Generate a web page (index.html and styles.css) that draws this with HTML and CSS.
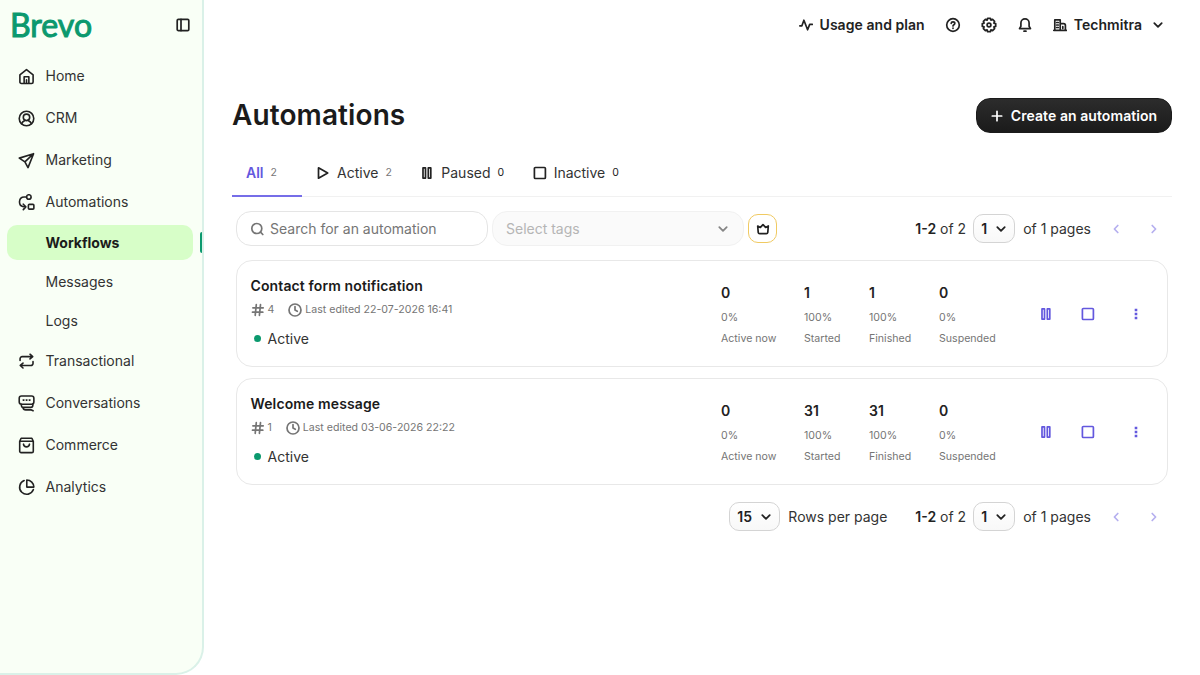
FILE: index.html
```html
<!DOCTYPE html>
<html lang="en">
<head>
    <meta charset="UTF-8">
    <title>Automations</title>
    <link rel="stylesheet" href="styles.css">
</head>
<body>
<!-- shared icons -->
<svg class="sprite">
    <symbol id="chevron" viewBox="0 0 12 12"><path d="M2.300 4.200L6 7.800l3.700-3.600"/></symbol>
    <symbol id="left" viewBox="0 0 12 12"><path d="M7.800 2.500L4.400 6l3.400 3.500"/></symbol>
    <symbol id="right" viewBox="0 0 12 12"><path d="M4.200 2.500L7.600 6 4.200 9.500"/></symbol>
    <symbol id="pause" viewBox="0 0 14 14"><path d="M3 1.900h2.500v10.200H3zM8.300 1.900h2.500v10.200H8.300z"/></symbol>
    <symbol id="stop" viewBox="0 0 14 14"><rect x="1.400" y="1.500" width="11" height="11" rx="1"/></symbol>
    <symbol id="hash" viewBox="0 0 14 14"><path d="M5.300 1.700L4.200 12.300M9.500 1.700L8.400 12.300M1.900 4.800h10.300M1.500 9.200h10.300"/></symbol>
    <symbol id="clock" viewBox="0 0 14 14"><circle cx="7" cy="7" r="6"/><path d="M7 3.500V7l2.300 1.300"/></symbol>
    <symbol id="dots" viewBox="0 0 14 14"><path class="solid" d="M5.700 1.700h2.600v2.600H5.700zM5.700 5.700h2.600v2.600H5.700zM5.700 9.700h2.600v2.600H5.700z"/></symbol>
</svg>

<div class="app">
    <aside class="sidebar">
        <div class="brand">
            <span class="logo">Brevo</span>
            <svg class="icon toggle" viewBox="0 0 14 14"><rect x="1.200" y="1.400" width="11.600" height="11.200" rx="1.200"/><path d="M5 1.400v11.200"/></svg>
        </div>
        <nav class="menu">
            <a class="item"><svg class="icon" viewBox="0 0 18 18"><path d="M2 7.200L9 1.600l7 5.600v7.600a1.600 1.600 0 0 1-1.600 1.600H3.600A1.600 1.600 0 0 1 2 14.800z"/><path d="M6.500 16.200V9.300h5v6.900M9 12.500v3.700"/></svg>Home</a>
            <a class="item"><svg class="icon" viewBox="0 0 18 18"><circle cx="9" cy="9" r="7.700"/><circle cx="9" cy="7.800" r="3.400"/><path d="M3.800 14.600c.6-2 2-3 3.500-3.600M14.200 14.600c-.6-2-2-3-3.500-3.600"/></svg>CRM</a>
            <a class="item"><svg class="icon" viewBox="0 0 18 18"><path d="M16.500 1.800L1.400 6.500l5.900 4 3.300 6zM16.500 1.800l-9.200 8.700"/></svg>Marketing</a>
            <a class="item"><svg class="icon" viewBox="0 0 18 18"><circle cx="11.500" cy="3.200" r="2.400"/><rect x="11" y="11" width="5.800" height="5" rx="1"/><path d="M9 3.200H6.500c-6 0-6.500 8.600-1.500 10.100l3 .3M5.600 10.800l2.700 2.800-2.700 2.900"/></svg>Automations</a>
            <div class="sub-wrap current"><a class="sub">Workflows</a></div>
            <div class="sub-wrap"><a class="sub">Messages</a></div>
            <div class="sub-wrap"><a class="sub">Logs</a></div>
            <a class="item"><svg class="icon" viewBox="0 0 18 18"><path d="M2.200 8V6a2.200 2.200 0 0 1 2.200-2.200h11M12.700 1.300L15.600 3.800 12.700 6.300M15.900 9v2a2.200 2.200 0 0 1-2.200 2.200H2.500M5.300 10.700L2.400 13.200 5.300 15.900"/></svg>Transactional</a>
            <a class="item"><svg class="icon" viewBox="0 0 18 18"><rect x="1.300" y="1" width="15.500" height="8.800" rx="2.400"/><path d="M3.600 9.800v1.700a1.600 1.600 0 0 0 1.600 1.600h8.200a2.300 2.300 0 0 0 2.300-2.300V9.500M5.200 13.100c.3 2 1.500 2.700 3 2.700h6l1.800.9M5.500 5.400h.8M8.700 5.400h.8M11.900 5.400h.8"/></svg>Conversations</a>
            <a class="item"><svg class="icon" viewBox="0 0 18 18"><path d="M1.800 4.500L3.300 1.300h11.400l1.500 3.200V15a1.500 1.500 0 0 1-1.500 1.500H3.300A1.500 1.500 0 0 1 1.800 15zM1.800 4.500h14.400M5.800 7.600c.5 3.800 5.900 3.800 6.400 0"/></svg>Commerce</a>
            <a class="item"><svg class="icon" viewBox="0 0 18 18"><path d="M6.500 1.700a7.500 7.500 0 1 0 9.800 9.500"/><path d="M9.300 1.100a7.600 7.600 0 0 1 7.500 7.500H9.300z"/></svg>Analytics</a>
        </nav>
    </aside>

    <main class="main">
        <header class="topbar">
            <a class="usage"><svg class="icon" viewBox="0 0 14 14"><path d="M.8 7.800h2.100L4.900 2.200 8.600 11.800 10.700 6.400h2.600"/></svg>Usage and plan</a>
            <svg class="icon" viewBox="0 0 16 16"><circle cx="8" cy="8" r="6.300"/><path d="M6.200 6.400C6.300 4.300 9.800 4.400 9.800 6.400 9.800 7.700 8 7.700 8 9M8 11v.3"/></svg>
            <svg class="icon" viewBox="0 0 16 16"><path d="M6.600 1.300h2.800l.5 1.800 1.700-.7 2 2-.7 1.700 1.800.5v2.800l-1.800.5.7 1.700-2 2-1.700-.7-.5 1.800H6.600l-.5-1.800-1.700.7-2-2 .7-1.700-1.800-.5V6.600l1.800-.5-.7-1.700 2-2 1.700.7z"/><circle cx="8" cy="8" r="1.900"/></svg>
            <svg class="icon" viewBox="0 0 16 16"><path d="M3.900 9.300V6a4.100 4.100 0 0 1 8.200 0v3.300l1.400 2.300h-11zM7 14.200h2"/></svg>
            <a class="account"><svg class="icon" viewBox="0 0 14 14"><path d="M1.800 12.400V1.900h5.400v10.500M7.200 5.600h3.400a1.800 1.800 0 0 1 1.800 1.800v5M.8 12.400h12.600M3.700 4.500h1.600M3.700 7h1.600M3.700 9.500h1.600M9.800 8.700v1.600"/></svg>Techmitra<svg class="icon chev"><use href="#chevron"/></svg></a>
        </header>

        <div class="title-row">
            <h1>Automations</h1>
            <button class="create"><svg class="icon" viewBox="0 0 12 12"><path d="M6 1.300v9.400M1.300 6h9.400"/></svg>Create an automation</button>
        </div>

        <div class="tabs">
            <a class="tab active">All<span class="count">2</span></a>
            <a class="tab"><svg class="icon" viewBox="0 0 14 14"><path d="M2.500 1.800v10.400L11.700 7z"/></svg>Active<span class="count">2</span></a>
            <a class="tab"><svg class="icon"><use href="#pause"/></svg>Paused<span class="count dark">0</span></a>
            <a class="tab"><svg class="icon"><use href="#stop"/></svg>Inactive<span class="count dark">0</span></a>
        </div>

        <div class="toolbar">
            <div class="field search"><svg class="icon" viewBox="0 0 14 14"><circle cx="6.800" cy="6.500" r="5"/><path d="M10.500 10.200l2.300 2.300"/></svg>Search for an automation</div>
            <div class="field tags">Select tags<svg class="icon chev"><use href="#chevron"/></svg></div>
            <div class="crown"><svg class="icon" viewBox="0 0 14 14"><path d="M1.700 4l2.700 1.400L7 2.600l2.600 2.800L12.300 4l-.5 6.300a1.500 1.500 0 0 1-1.500 1.300H3.700a1.500 1.500 0 0 1-1.500-1.300z"/></svg></div>
            <div class="pager">
                <span class="range"><b>1-2</b> of 2</span>
                <span class="select">1<svg class="icon chev"><use href="#chevron"/></svg></span>
                <span class="pages">of 1 pages</span>
                <svg class="icon arrow"><use href="#left"/></svg>
                <svg class="icon arrow"><use href="#right"/></svg>
            </div>
        </div>

        <section class="list">
            <article class="card">
                <div class="info">
                    <h2>Contact form notification</h2>
                    <div class="meta"><svg class="icon"><use href="#hash"/></svg><span class="num">4</span><svg class="icon clock"><use href="#clock"/></svg>Last edited 22-07-2026 16:41</div>
                    <div class="status">Active</div>
                </div>
                <div class="stats">
                    <div><b>0</b><span>0%</span><span>Active now</span></div>
                    <div><b>1</b><span>100%</span><span>Started</span></div>
                    <div><b>1</b><span>100%</span><span>Finished</span></div>
                    <div><b>0</b><span>0%</span><span>Suspended</span></div>
                </div>
                <div class="actions">
                    <svg class="icon"><use href="#pause"/></svg>
                    <svg class="icon"><use href="#stop"/></svg>
                    <svg class="icon more"><use href="#dots"/></svg>
                </div>
            </article>
            <article class="card">
                <div class="info">
                    <h2>Welcome message</h2>
                    <div class="meta"><svg class="icon"><use href="#hash"/></svg><span class="num">1</span><svg class="icon clock"><use href="#clock"/></svg>Last edited 03-06-2026 22:22</div>
                    <div class="status">Active</div>
                </div>
                <div class="stats">
                    <div><b>0</b><span>0%</span><span>Active now</span></div>
                    <div><b>31</b><span>100%</span><span>Started</span></div>
                    <div><b>31</b><span>100%</span><span>Finished</span></div>
                    <div><b>0</b><span>0%</span><span>Suspended</span></div>
                </div>
                <div class="actions">
                    <svg class="icon"><use href="#pause"/></svg>
                    <svg class="icon"><use href="#stop"/></svg>
                    <svg class="icon more"><use href="#dots"/></svg>
                </div>
            </article>
        </section>

        <footer class="footer">
            <span class="select rows">15<svg class="icon chev"><use href="#chevron"/></svg></span>
            <span class="per-page">Rows per page</span>
            <div class="pager">
                <span class="range"><b>1-2</b> of 2</span>
                <span class="select">1<svg class="icon chev"><use href="#chevron"/></svg></span>
                <span class="pages">of 1 pages</span>
                <svg class="icon arrow"><use href="#left"/></svg>
                <svg class="icon arrow"><use href="#right"/></svg>
            </div>
        </footer>
    </main>
</div>
</body>
</html>
```
FILE: styles.css
```css
* {
    padding: 0;
    margin: 0;
    box-sizing: border-box;
}

body {
    background-color: #fff;
    color: #333;
    font-family: Inter, sans-serif;
    font-size: 14px;
    line-height: 20px;
    height: 100vh;
    overflow: hidden;
}

.sprite {
    display: none;
}

.icon {
    width: 14px;
    height: 14px;
    flex: none;
    fill: none;
    stroke: currentColor;
    stroke-width: 1.7;
    stroke-linecap: round;
    stroke-linejoin: round;
}

.solid {
    fill: currentColor;
    stroke: none;
}

.icon.chev {
    width: 12px;
    height: 12px;
    stroke-width: 1.8;
}

.app {
    display: flex;
    height: 100vh;
}

/* Sidebar */
.sidebar {
    width: 204px;
    flex: none;
    background-color: #f9fff6;
    border-right: 2px solid #daf1e8;
    border-bottom: 2px solid #daf1e8;
    border-bottom-right-radius: 28px;
}

.brand {
    height: 55px;
    padding: 0 12px 5px 10px;
    display: flex;
    justify-content: space-between;
    align-items: center;
}

.logo {
    font-family: Lato, sans-serif;
    font-size: 32px;
    font-weight: 400;
    color: #0b996e;
    -webkit-text-stroke: 1px #0b996e;
}

.toggle {
    color: #222;
}

.item {
    height: 42px;
    padding-left: 18px;
    display: flex;
    align-items: center;
    gap: 10.5px;
}

.item .icon {
    width: 17px;
    height: 17px;
    color: #222;
}

.sub-wrap {
    height: 39px;
    padding: 2px 9px 2px 7px;
    position: relative;
}

.sub {
    display: block;
    height: 35px;
    line-height: 35px;
    padding-left: 38.5px;
    border-radius: 10px;
}

.current .sub {
    background-color: #d7fec8;
    color: #1b1b1b;
    font-weight: 700;
}

.current::after {
    content: "";
    position: absolute;
    right: 0;
    top: 9px;
    width: 2px;
    height: 21px;
    border-radius: 2px 0 0 2px;
    background-color: #0b996e;
}

/* Main */
.main {
    flex: 1;
    padding: 0 28px;
}

.topbar {
    height: 50px;
    display: flex;
    justify-content: flex-end;
    align-items: center;
    gap: 20px;
    padding-right: 8px;
    color: #222;
}

.topbar > .icon {
    width: 16px;
    height: 16px;
}

.usage,
.account {
    display: flex;
    align-items: center;
    gap: 7px;
    font-weight: 600;
    letter-spacing: 0.05px;
}

.account .chev {
    margin-left: 3px;
}

.title-row {
    height: 86px;
    padding-top: 48px;
    display: flex;
    justify-content: space-between;
    align-items: flex-start;
}

h1 {
    font-size: 28px;
    font-weight: 600;
    line-height: 35px;
    letter-spacing: 0.1px;
    color: #1b1b1b;
}

.create {
    width: 196px;
    height: 35px;
    border: 1px solid #1b1b1b;
    border-radius: 14px;
    background: linear-gradient(#2c2c2c, #1b1b1b);
    color: #fff;
    font: 600 14px Inter, sans-serif;
    letter-spacing: 0.07px;
    display: flex;
    justify-content: center;
    align-items: center;
    gap: 8px;
}

.create .icon {
    width: 12px;
    height: 12px;
}

.tabs {
    height: 61px;
    display: flex;
    border-bottom: 1px solid #f1f1f1;
}

.tab {
    display: flex;
    align-items: center;
    padding: 12px 14.5px 0 14px;
    height: 61px;
}

.tab .icon {
    color: #222;
    margin-right: 7px;
}

.tab.active {
    width: 70px;
    color: #6358de;
    font-weight: 600;
    border-bottom: 2px solid #766de8;
    padding-top: 14px;
}

.count {
    font-size: 10.5px;
    font-weight: 400;
    color: #777;
    margin-left: 7px;
}

.count.dark {
    color: #222;
}

.toolbar {
    height: 63px;
    padding: 0 4px;
    display: flex;
    align-items: center;
    gap: 4px;
}

.field {
    width: 252px;
    height: 35px;
    border: 1px solid #e5e5e5;
    border-radius: 15px;
    display: flex;
    align-items: center;
    padding: 0 14px 0 13px;
    color: #757575;
}

.search {
    gap: 6px;
}

.tags {
    justify-content: space-between;
    background-color: #fafafa;
    border-color: #f1f1f1;
    color: #b5b5b5;
}

.tags .chev {
    color: #858585;
}

.crown {
    width: 29px;
    height: 29px;
    border: 1.5px solid #f0ca62;
    border-radius: 10px;
    display: flex;
    justify-content: center;
    align-items: center;
    color: #222;
}

.pager {
    display: flex;
    align-items: center;
    margin-left: auto;
}

.pager b {
    font-weight: 600;
    color: #222;
}

.select {
    width: 42px;
    height: 29px;
    margin: 0 8px 0 7px;
    padding: 0 7px;
    border: 1px solid #d4d4d4;
    border-radius: 10px;
    background: linear-gradient(#fff, #f8f8f8);
    display: flex;
    justify-content: space-between;
    align-items: center;
    font-weight: 600;
    color: #222;
}

.arrow {
    width: 12px;
    height: 12px;
    margin-left: 26px;
    color: #b5afef;
}

.pages + .arrow {
    margin-left: 19px;
}

.pager .arrow:last-child {
    margin-right: 8px;
}

/* Cards */
.list {
    padding: 0 4px;
    display: flex;
    flex-direction: column;
    gap: 11px;
}

.card {
    height: 107px;
    border: 1px solid #e8e8e8;
    border-radius: 16px;
    display: flex;
}

.info {
    width: 484px;
    padding: 15px 0 0 13.5px;
}

h2 {
    font-size: 14px;
    font-weight: 600;
    line-height: 20px;
    letter-spacing: 0.12px;
    color: #1b1b1b;
}

.meta {
    height: 28px;
    display: flex;
    align-items: center;
    font-size: 10.6px;
    color: #757575;
}

.num {
    margin: 0 14px 0 3px;
}

.clock {
    margin-right: 3px;
}

.status {
    display: flex;
    align-items: center;
    height: 29px;
}

.status::before {
    content: "";
    width: 7px;
    height: 7px;
    border-radius: 50%;
    background-color: #0b996e;
    margin: 0 7px 0 3px;
}

.stats {
    display: grid;
    grid-template-columns: 83px 65px 70px 100px;
    padding-top: 22px;
}

.stats b,
.stats span {
    display: block;
}

.stats b {
    font-weight: 600;
    color: #222;
}

.stats span {
    font-size: 10.6px;
    line-height: 21px;
    color: #757575;
}

.stats b + span {
    margin-top: 4px;
}

.actions {
    display: flex;
    align-items: center;
    gap: 28px;
    color: #6358de;
}

.more {
    margin-left: 6px;
}

.footer {
    height: 63px;
    padding: 0 4px;
    display: flex;
    align-items: center;
    justify-content: flex-end;
}

.footer .pager {
    margin-left: 28px;
}

.rows {
    width: 51px;
}
```
